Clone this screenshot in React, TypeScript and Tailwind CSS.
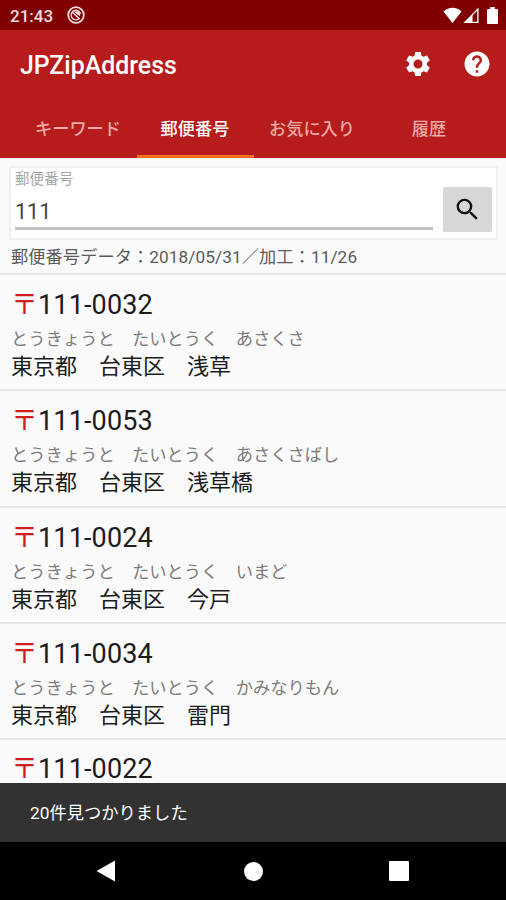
import { useState } from "react";
import { MdHelp, MdSearch, MdSettings } from "react-icons/md";

interface Address {
    zip: string;
    kana?: string;
    name?: string;
}

const TABS = ["キーワード", "郵便番号", "お気に入り", "履歴"];

const ADDRESSES: Address[] = [
    { zip: "111-0032", kana: "とうきょうと　たいとうく　あさくさ", name: "東京都　台東区　浅草" },
    { zip: "111-0053", kana: "とうきょうと　たいとうく　あさくさばし", name: "東京都　台東区　浅草橋" },
    { zip: "111-0024", kana: "とうきょうと　たいとうく　いまど", name: "東京都　台東区　今戸" },
    { zip: "111-0034", kana: "とうきょうと　たいとうく　かみなりもん", name: "東京都　台東区　雷門" },
    { zip: "111-0022" },
];

function StatusBar() {
    return (
        <div className="flex h-[30px] shrink-0 items-center bg-[#800000] pl-[10px] pr-[8px] text-[#f3dede]">
            <span className="w-[57px] pt-[2px] text-[17px] font-medium leading-[30px]">21:43</span>
            <svg className="h-[18px] w-[18px]" viewBox="0 0 18 18" fill="none" stroke="currentColor">
                <circle cx="9" cy="9" r="7.8" strokeWidth="1.8" />
                <path d="M12.2 12.6A4.8 4.8 0 1 1 13.6 8" strokeWidth="1.3" />
                <path d="M5.5 6.5 12.8 13" strokeWidth="1.6" />
                <path d="M6.5 5.5h4.5q2.5 1.2 2 4.8L9.8 8.2Z" fill="currentColor" stroke="none" />
            </svg>
            <div className="ml-auto flex items-center text-white">
                <svg className="h-[17px] w-[19px]" viewBox="0 0 19 17" fill="currentColor">
                    <path d="M.5 4.5C5.5-.5 13.5-.5 18.5 4.5L9.5 16Z" />
                </svg>
                <svg className="ml-px h-[17px] w-[16px]" viewBox="0 0 16 17">
                    <path d="M1.8 15.4 14.9 2V15.4Z" fill="none" stroke="currentColor" strokeWidth="1.3" />
                    <path d="M1 16 9.5 7.5V16Z" fill="currentColor" />
                </svg>
                <svg className="ml-[8px] h-[17px] w-[11px]" viewBox="0 0 11 17" fill="currentColor">
                    <path d="M3.2 0h4.6v2H10q1 0 1 1v13q0 1-1 1H1q-1 0-1-1V3q0-1 1-1h2.2z" />
                </svg>
            </div>
        </div>
    );
}

function AddressRow({ zip, kana, name }: Address) {
    return (
        <li className="h-[116.3px] shrink-0 border-b-2 border-[#e6e6e6] pl-[11px] pt-[14px] last:h-auto last:border-0">
            <div className="flex h-[32px] items-center text-[27px] leading-[32px] text-[#1c1c1c] last:h-[30px]">
                <span className="w-[27px] text-[#d01f1f]">〒</span>
                <span className="tracking-[0.15px]">{zip}</span>
            </div>
            {kana && <div className="h-[31px] pt-[4px] text-[17.3px] leading-[28px] text-[#7c7c7c]">{kana}</div>}
            {name && <div className="text-[22px] leading-[30px] text-[#1c1c1c]">{name}</div>}
        </li>
    );
}

export default function App() {
    const [tab, setTab] = useState(1);
    const [query, setQuery] = useState("111");

    return (
        <div className="flex h-[900px] w-[506px] flex-col overflow-hidden bg-[#fafafa] font-[Roboto,'Noto_Sans_CJK_JP',sans-serif]">
            <StatusBar />

            <header className="flex h-[128px] shrink-0 flex-col bg-[#b71c1c] text-white">
                <div className="flex h-[69px] items-center pl-[20px] pr-[14px]">
                    <h1 className="pt-[3px] text-[24.9px] font-medium leading-[30px]">JPZipAddress</h1>
                    <MdSettings className="ml-auto mb-[2px] size-[30px]" />
                    <MdHelp className="mb-[2px] ml-[29px] size-[30px]" />
                </div>
                <nav className="flex h-[59px] pl-[20px]">
                    {TABS.map((label, i) => (
                        <button
                            key={label}
                            onClick={() => setTab(i)}
                            className={`h-[59px] w-[117px] whitespace-nowrap border-b-[3px] pr-[1px] pt-[5px] text-center text-[17.2px] font-medium ${
                                i === tab
                                    ? "border-[#ff6d1f] text-white"
                                    : "border-transparent text-[#eda9a5]"
                            }`}
                        >
                            {label}
                        </button>
                    ))}
                </nav>
            </header>

            {/* Search card */}
            <div className="ml-[9px] mr-[8px] mt-[8px] flex h-[74px] shrink-0 border-2 border-[#f0f0f0] bg-white pl-[4px]">
                <label className="mr-[10px] flex w-[418px] flex-col">
                    <span className="h-[20px] pt-px text-[14.6px] leading-[20px] text-[#a6a6a6]">郵便番号</span>
                    <input
                        value={query}
                        onChange={(e) => setQuery(e.target.value)}
                        className="h-[42px] w-full border-b-[3px] border-[#c1c1c1] pt-[7px] text-[21.5px] text-[#444] outline-none"
                    />
                </label>
                <button className="mt-[19px] flex h-[45px] w-[49px] items-center justify-center rounded-[2px] bg-[#d6d7d7] text-[#111]">
                    <MdSearch className="size-[29px]" />
                </button>
            </div>

            <p className="h-[35px] shrink-0 border-b-2 border-[#e6e6e6] pl-[11px] pt-px text-[17.2px] leading-[32px] tracking-[0.1px] text-[#5a5a5a]">
                郵便番号データ：2018/05/31／加工：11/26
            </p>

            <ul className="flex min-h-0 flex-1 flex-col overflow-hidden">
                {ADDRESSES.map((a) => (
                    <AddressRow key={a.zip} {...a} />
                ))}
            </ul>

            {/* Snackbar */}
            <div className="flex h-[59px] shrink-0 items-center bg-[#323232] pl-[30px] pt-[2px] text-[17.3px] text-white">
                20件見つかりました
            </div>

            {/* Android navigation bar */}
            <div className="flex h-[58px] shrink-0 items-center bg-black pl-[96px]">
                <svg className="h-[22px] w-[20px]" viewBox="0 0 20 22" fill="white">
                    <path d="M19 .5V21.5L.5 11Z" />
                </svg>
                <div className="ml-[128px] size-[19px] rounded-full bg-white" />
                <div className="ml-[126px] size-[20px] rounded-[1px] bg-white" />
            </div>
        </div>
    );
}
